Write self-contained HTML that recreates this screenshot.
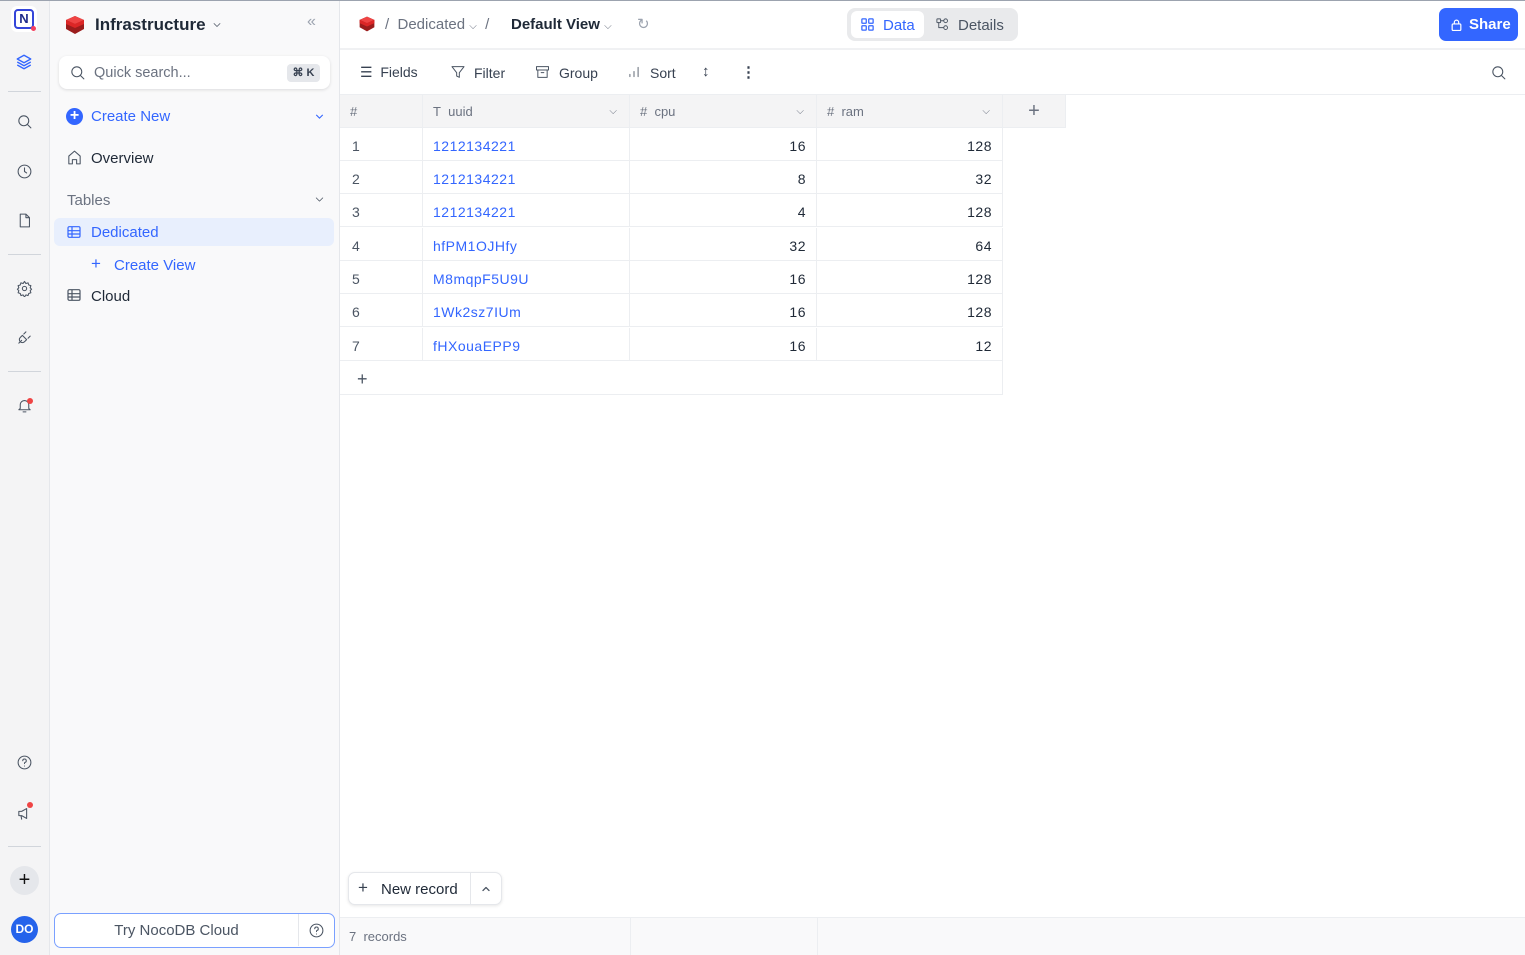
<!DOCTYPE html>
<html><head><meta charset="utf-8"><style>
*{box-sizing:border-box;margin:0;padding:0}
body{width:1525px;height:955px;overflow:hidden;font-family:"Liberation Sans",sans-serif;color:#1f2937;background:#fff;position:relative;font-size:14px}
.a{position:absolute}
.rail{left:0;top:0;width:50px;height:955px;background:#f4f4f5;border-right:1px solid #e5e7eb}
.side{left:50px;top:0;width:290px;height:955px;background:#f9f9fa;border-right:1px solid #e5e7eb}
svg{display:block}
.ic{stroke:#4b5563;fill:none;stroke-width:1.5;stroke-linecap:round;stroke-linejoin:round}
.hl{height:1px;background:#d1d5db;left:8px;width:33px}
.cell{position:absolute;height:33px;border-right:1px solid #eceef1;border-bottom:1px solid #eceef1;font-size:14px;letter-spacing:.5px;line-height:36px;overflow:hidden}
.hdr{background:#f4f4f5;color:#6b7280;font-size:13px;letter-spacing:0;line-height:33px}
.blue{color:#3366ff}
</style></head><body>
<div class="a" style="left:0;top:0;width:1525px;height:1px;background:#9ca3af;z-index:5"></div>
<div class="a rail">
 <div class="a" style="left:11px;top:6px;width:26px;height:26px;background:#fff;border-radius:6px"><div class="a" style="left:3px;top:3px;width:20px;height:20px;border:2.5px solid #3445d9;border-radius:4px;color:#1e2a8a;font-weight:bold;font-size:13px;line-height:15px;text-align:center">N</div><div class="a" style="left:20px;top:20px;width:5px;height:5px;border-radius:50%;background:#f43f5e"></div></div>
 <svg class="a" style="left:15px;top:53px" width="18" height="18" viewBox="0 0 24 24"><path d="M12 3 3 8l9 5 9-5z M3 12l9 5 9-5 M3 16l9 5 9-5" fill="none" stroke="#3366ff" stroke-width="1.8" stroke-linejoin="round"/></svg>
 <div class="a hl" style="top:91px"></div>
 <svg class="a ic" style="left:16px;top:113px" width="17" height="17" viewBox="0 0 24 24"><circle cx="11" cy="11" r="7"/><path d="m16 16 5 5"/></svg>
 <svg class="a ic" style="left:16px;top:163px" width="17" height="17" viewBox="0 0 24 24"><circle cx="12" cy="12" r="9"/><path d="M12 7v5l3 2"/></svg>
 <svg class="a ic" style="left:16px;top:212px" width="17" height="17" viewBox="0 0 24 24"><path d="M6 3h8l5 5v13H6z M14 3v5h5"/></svg>
 <div class="a hl" style="top:254px"></div>
 <svg class="a ic" style="left:16px;top:280px" width="17" height="17" viewBox="0 0 24 24"><circle cx="12" cy="12" r="3"/><path d="M12 2l2 3 3-1 1 3 3 1-1 3 2 2-2 2 1 3-3 1-1 3-3-1-2 3-2-3-3 1-1-3-3-1 1-3-2-2 2-2-1-3 3-1 1-3 3 1z"/></svg>
 <svg class="a ic" style="left:16px;top:329px" width="17" height="17" viewBox="0 0 24 24"><path d="M4 20l4-4 M9 9l6 6-3 3a4 4 0 0 1-6-6z M14 4l-3 3 M20 10l-3 3"/></svg>
 <div class="a hl" style="top:371px"></div>
 <svg class="a ic" style="left:16px;top:397px" width="17" height="17" viewBox="0 0 24 24"><path d="M6 16V11a6 6 0 0 1 12 0v5l2 2H4z M10 21h4"/></svg>
 <div class="a" style="left:27px;top:398px;width:6px;height:6px;border-radius:50%;background:#ef4444"></div>
 <svg class="a ic" style="left:16px;top:754px" width="17" height="17" viewBox="0 0 24 24"><circle cx="12" cy="12" r="9"/><path d="M9.5 9.5a2.5 2.5 0 1 1 3 2.5c-.5.2-.5.8-.5 1.5 M12 17h.01"/></svg>
 <svg class="a ic" style="left:16px;top:805px" width="17" height="17" viewBox="0 0 24 24"><path d="M4 9h4l7-4v14l-7-4H4z M7 15l1 5"/></svg>
 <div class="a" style="left:27px;top:802px;width:6px;height:6px;border-radius:50%;background:#ef4444"></div>
 <div class="a hl" style="top:846px"></div>
 <div class="a" style="left:10px;top:866px;width:29px;height:29px;border-radius:50%;background:#e5e7eb;text-align:center;line-height:28px;font-size:20px;color:#111">+</div>
 <div class="a" style="left:11px;top:916px;width:27px;height:27px;border-radius:50%;background:#2563eb;color:#fff;font-size:12px;font-weight:bold;text-align:center;line-height:27px">DO</div>
</div>
<div class="a side">
 <svg class="a" style="left:14px;top:15px" width="22" height="20" viewBox="0 0 22 20"><path d="M11 1 20 5v9l-9 5-9-5V5z" fill="#9b1c1c"/><path d="M11 1 20 5l-9 4-9-4z" fill="#ef4444"/><path d="M2 5l9 4 9-4v4l-9 4-9-4z" fill="#dc2626"/></svg>
 <div class="a" style="left:45px;top:15px;font-size:17px;font-weight:bold;color:#1f2937">Infrastructure</div>
 <svg class="a ic" style="left:161px;top:19px" width="12" height="12" viewBox="0 0 24 24"><path d="m6 9 6 6 6-6"/></svg>
 <div class="a" style="left:257px;top:13px;color:#9ca3af;font-size:16px">«</div>
 <div class="a" style="left:9px;top:56px;width:271px;height:33px;background:#fff;border-radius:8px;box-shadow:0 1px 3px rgba(0,0,0,.12)">
  <svg class="a ic" style="left:10px;top:8px" width="17" height="17" viewBox="0 0 24 24"><circle cx="11" cy="11" r="7"/><path d="m16 16 5 5"/></svg>
  <div class="a" style="left:35px;top:9px;color:#6b7280;font-size:14.5px">Quick search...</div>
  <div class="a" style="left:228px;top:8px;width:33px;height:18px;background:#e5e7eb;border-radius:4px;font-size:11px;font-weight:bold;color:#374151;text-align:center;line-height:18px">⌘ K</div>
 </div>
 <div class="a" style="left:16px;top:108px;width:17px;height:17px;border-radius:50%;background:#3366ff;color:#fff;text-align:center;line-height:16px;font-size:16px;font-weight:bold">+</div>
 <div class="a blue" style="left:41px;top:108px;font-size:15px">Create New</div>
 <svg class="a" style="left:263px;top:110px" width="13" height="13" viewBox="0 0 24 24"><path d="m6 9 6 6 6-6" fill="none" stroke="#3366ff" stroke-width="2"/></svg>
 <svg class="a ic" style="left:16px;top:149px" width="17" height="17" viewBox="0 0 24 24"><path d="M4 10 12 3l8 7v11h-5v-6H9v6H4z"/></svg>
 <div class="a" style="left:41px;top:150px;font-size:15px">Overview</div>
 <div class="a" style="left:17px;top:192px;font-size:15px;color:#6b7280">Tables</div>
 <svg class="a ic" style="left:263px;top:193px" width="13" height="13" viewBox="0 0 24 24"><path d="m6 9 6 6 6-6"/></svg>
 <div class="a" style="left:4px;top:218px;width:280px;height:28px;background:#e8effd;border-radius:6px"></div>
 <svg class="a" style="left:16px;top:224px" width="16" height="16" viewBox="0 0 24 24"><rect x="3" y="4" width="18" height="16" rx="2" fill="none" stroke="#3366ff" stroke-width="1.8"/><path d="M3 10h18M3 15h18M9 4v16" stroke="#3366ff" stroke-width="1.8"/></svg>
 <div class="a blue" style="left:41px;top:224px;font-size:15px">Dedicated</div>
 <div class="a blue" style="left:41px;top:254px;font-size:17px">+</div>
 <div class="a blue" style="left:64px;top:257px;font-size:15px">Create View</div>
 <svg class="a" style="left:16px;top:287px" width="16" height="16" viewBox="0 0 24 24"><rect x="3" y="4" width="18" height="16" rx="2" fill="none" stroke="#4b5563" stroke-width="1.8"/><path d="M3 10h18M3 15h18M9 4v16" stroke="#4b5563" stroke-width="1.8"/></svg>
 <div class="a" style="left:41px;top:288px;font-size:15px">Cloud</div>
 <div class="a" style="left:4px;top:913px;width:281px;height:35px;border:1.5px solid #7aa0ff;border-radius:7px;background:#fff">
  <div class="a" style="left:0;top:0;width:244px;height:32px;text-align:center;line-height:34px;font-size:15px;color:#4b5563;border-right:1px solid #e5e7eb">Try NocoDB Cloud</div>
  <svg class="a ic" style="left:253px;top:8px" width="17" height="17" viewBox="0 0 24 24"><circle cx="12" cy="12" r="9"/><path d="M9.5 9.5a2.5 2.5 0 1 1 3 2.5c-.5.2-.5.8-.5 1.5 M12 17h.01"/></svg>
 </div>
</div>
<!-- top bar -->
<div class="a" style="left:340px;top:48px;width:1185px;height:2px;background:#f0f1f3"></div>
<svg class="a" style="left:358px;top:15px" width="18" height="18" viewBox="0 0 22 20"><path d="M11 1 20 5v9l-9 5-9-5V5z" fill="#9b1c1c"/><path d="M11 1 20 5l-9 4-9-4z" fill="#ef4444"/><path d="M2 5l9 4 9-4v4l-9 4-9-4z" fill="#dc2626"/></svg>
<div class="a" style="left:385px;top:16px;font-size:15px;color:#6b7280">/ &nbsp;Dedicated <span style="font-size:10px">⌵</span> &nbsp;/</div>
<div class="a" style="left:511px;top:16px;font-size:15px;color:#1f2937;font-weight:600">Default View <span style="font-size:10px;color:#6b7280;font-weight:normal">⌵</span></div>
<div class="a" style="left:637px;top:15px;font-size:15px;color:#9ca3af">↻</div>
<div class="a" style="left:847px;top:8px;width:171px;height:33px;background:#e9eaec;border-radius:8px">
 <div class="a" style="left:4px;top:3px;width:73px;height:27px;background:#fff;border-radius:6px"></div>
 <svg class="a" style="left:13px;top:9px" width="15" height="15" viewBox="0 0 24 24"><g fill="none" stroke="#3366ff" stroke-width="2"><rect x="3" y="3" width="7" height="7" rx="1"/><rect x="14" y="3" width="7" height="7" rx="1"/><rect x="3" y="14" width="7" height="7" rx="1"/><rect x="14" y="14" width="7" height="7" rx="1"/></g></svg>
 <div class="a blue" style="left:36px;top:9px;font-size:15px">Data</div>
 <svg class="a ic" style="left:88px;top:9px" width="15" height="15" viewBox="0 0 24 24"><rect x="3" y="3" width="6" height="6" rx="1"/><circle cx="17" cy="6" r="3"/><circle cx="17" cy="17" r="3"/><path d="M9 6h5M6 9v8h8"/></svg>
 <div class="a" style="left:111px;top:9px;font-size:15px;color:#4b5563">Details</div>
</div>
<div class="a" style="left:1439px;top:8px;width:79px;height:33px;background:#3366ff;border-radius:7px;color:#fff;font-size:15px;line-height:33px;font-weight:600">
 <svg class="a" style="left:11px;top:10px" width="13" height="14" viewBox="0 0 24 24"><rect x="4" y="10" width="16" height="12" rx="2" fill="none" stroke="#fff" stroke-width="2.2"/><path d="M8 10V7a4 4 0 0 1 8 0v3" fill="none" stroke="#fff" stroke-width="2.2"/></svg>
 <span class="a" style="left:30px;top:0">Share</span></div>
<!-- toolbar -->
<div class="a" style="left:340px;top:94px;width:1185px;height:1px;background:#eceef1"></div>
<div class="a" style="left:360px;top:64px;font-size:14px;color:#374151">☰&nbsp;&nbsp;Fields</div>
<svg class="a ic" style="left:450px;top:64px" width="16" height="16" viewBox="0 0 24 24"><path d="M3 4h18l-7 9v7l-4-2v-5z"/></svg>
<div class="a" style="left:474px;top:65px;font-size:14px;color:#374151">Filter</div>
<svg class="a ic" style="left:534px;top:64px" width="17" height="16" viewBox="0 0 24 24"><rect x="3" y="4" width="18" height="5"/><path d="M5 9v11h14V9 M10 13h4"/></svg>
<div class="a" style="left:559px;top:65px;font-size:14px;color:#374151">Group</div>
<svg class="a ic" style="left:627px;top:65px" width="14" height="14" viewBox="0 0 24 24"><path d="M5 20v-4M12 20v-9M19 20V4"/></svg>
<div class="a" style="left:650px;top:65px;font-size:14px;color:#374151">Sort</div>
<div class="a" style="left:702px;top:63px;font-size:15px;color:#374151">↕</div>
<div class="a" style="left:741px;top:63px;font-size:15px;color:#374151;font-weight:bold">⋮</div>
<svg class="a ic" style="left:1490px;top:64px" width="17" height="17" viewBox="0 0 24 24"><circle cx="11" cy="11" r="7"/><path d="m16 16 5 5"/></svg>
<!-- grid -->
<div class="a" style="left:340px;top:95px">
 <div class="cell hdr" style="left:0;top:0;width:83px;padding-left:10px">#</div>
 <div class="cell hdr" style="left:83px;top:0;width:207px;padding-left:10px">T&nbsp; uuid<span style="position:absolute;right:12px;font-size:10px">⌵</span></div>
 <div class="cell hdr" style="left:290px;top:0;width:187px;padding-left:10px"># &nbsp;cpu<span style="position:absolute;right:12px;font-size:10px">⌵</span></div>
 <div class="cell hdr" style="left:477px;top:0;width:186px;padding-left:10px"># &nbsp;ram<span style="position:absolute;right:12px;font-size:10px">⌵</span></div>
 <div class="cell hdr" style="left:663px;top:0;width:63px;text-align:center;font-size:20px;color:#6b7280">+</div>
</div>
<div class="a" style="left:340px;top:0">
<div class="cell" style="left:0;top:128px;width:83px;padding-left:12px;color:#4b5563">1</div><div class="cell blue" style="left:83px;top:128px;width:207px;padding-left:10px">1212134221</div><div class="cell" style="left:290px;top:128px;width:187px;text-align:right;padding-right:10px">16</div><div class="cell" style="left:477px;top:128px;width:186px;text-align:right;padding-right:10px">128</div>
<div class="cell" style="left:0;top:161px;width:83px;padding-left:12px;color:#4b5563">2</div><div class="cell blue" style="left:83px;top:161px;width:207px;padding-left:10px">1212134221</div><div class="cell" style="left:290px;top:161px;width:187px;text-align:right;padding-right:10px">8</div><div class="cell" style="left:477px;top:161px;width:186px;text-align:right;padding-right:10px">32</div>
<div class="cell" style="left:0;top:194px;width:83px;padding-left:12px;color:#4b5563">3</div><div class="cell blue" style="left:83px;top:194px;width:207px;padding-left:10px">1212134221</div><div class="cell" style="left:290px;top:194px;width:187px;text-align:right;padding-right:10px">4</div><div class="cell" style="left:477px;top:194px;width:186px;text-align:right;padding-right:10px">128</div>
<div class="cell" style="left:0;top:228px;width:83px;padding-left:12px;color:#4b5563">4</div><div class="cell blue" style="left:83px;top:228px;width:207px;padding-left:10px">hfPM1OJHfy</div><div class="cell" style="left:290px;top:228px;width:187px;text-align:right;padding-right:10px">32</div><div class="cell" style="left:477px;top:228px;width:186px;text-align:right;padding-right:10px">64</div>
<div class="cell" style="left:0;top:261px;width:83px;padding-left:12px;color:#4b5563">5</div><div class="cell blue" style="left:83px;top:261px;width:207px;padding-left:10px">M8mqpF5U9U</div><div class="cell" style="left:290px;top:261px;width:187px;text-align:right;padding-right:10px">16</div><div class="cell" style="left:477px;top:261px;width:186px;text-align:right;padding-right:10px">128</div>
<div class="cell" style="left:0;top:294px;width:83px;padding-left:12px;color:#4b5563">6</div><div class="cell blue" style="left:83px;top:294px;width:207px;padding-left:10px">1Wk2sz7IUm</div><div class="cell" style="left:290px;top:294px;width:187px;text-align:right;padding-right:10px">16</div><div class="cell" style="left:477px;top:294px;width:186px;text-align:right;padding-right:10px">128</div>
<div class="cell" style="left:0;top:328px;width:83px;padding-left:12px;color:#4b5563">7</div><div class="cell blue" style="left:83px;top:328px;width:207px;padding-left:10px">fHXouaEPP9</div><div class="cell" style="left:290px;top:328px;width:187px;text-align:right;padding-right:10px">16</div><div class="cell" style="left:477px;top:328px;width:186px;text-align:right;padding-right:10px">12</div>
<div class="cell" style="left:0;top:361px;width:663px;height:34px;padding-left:17px;font-size:18px;color:#4b5563">+</div>
</div>
<!-- bottom -->
<div class="a" style="left:348px;top:872px;width:154px;height:33px;background:#fff;border:1px solid #e5e7eb;border-radius:7px;box-shadow:0 1px 3px rgba(0,0,0,.1)">
 <div class="a" style="left:9px;top:5px;font-size:17px;color:#374151">+</div>
 <div class="a" style="left:32px;top:8px;font-size:15px;color:#1f2937">New record</div>
 <div class="a" style="left:121px;top:0;width:1px;height:31px;background:#e5e7eb"></div>
 <svg class="a ic" style="left:131px;top:10px" width="12" height="12" viewBox="0 0 24 24"><path d="m6 15 6-6 6 6" stroke-width="2.5"/></svg>
</div>
<div class="a" style="left:340px;top:917px;width:1185px;height:38px;background:#f9f9fa;border-top:1px solid #eceef1"></div>
<div class="a" style="left:630px;top:917px;width:1px;height:38px;background:#eceef1"></div>
<div class="a" style="left:817px;top:917px;width:1px;height:38px;background:#eceef1"></div>
<div class="a" style="left:349px;top:929px;font-size:13px;color:#6b7280">7 &nbsp;records</div>
</body></html>
